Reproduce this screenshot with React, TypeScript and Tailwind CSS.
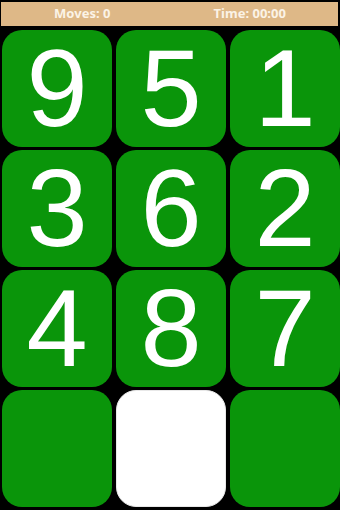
const tiles = [9, 5, 1, 3, 6, 2, 4, 8, 7, 0, null, 0];

export default function App() {
  return (
    <div
      className="w-[340px] h-[510px] bg-black overflow-hidden"
      style={{ fontFamily: '"Liberation Sans", Arial, sans-serif' }}
    >
      <div
        className="ml-[1px] mt-[2px] mr-[2px] h-[24px] bg-[#deb887] flex items-center text-[13px] font-bold text-[#fbf3e6]"
        style={{ fontFamily: '"Noto Sans", "Liberation Sans", sans-serif' }}
      >
        <div className="w-1/2 text-center pr-[6px]">Moves: 0</div>
        <div className="w-1/2 text-center pr-[8px]">Time: 00:00</div>
      </div>
      <div className="grid grid-cols-[110px_110px_110px] grid-rows-[117px_117px_117px_117px] gap-x-[4px] gap-y-[3px] pl-[2px] pt-[4px]">
        {tiles.map((t, i) =>
          t === null ? (
            <div key={i} className="rounded-[20px] bg-white border border-[#e8e8e8]" />
          ) : (
            <div
              key={i}
              className="rounded-[20px] bg-[#0a950a] flex items-center justify-center text-white text-[110px] leading-none pb-[2px]"
            >
              {t !== 0 ? t : ''}
            </div>
          )
        )}
      </div>
    </div>
  );
}
